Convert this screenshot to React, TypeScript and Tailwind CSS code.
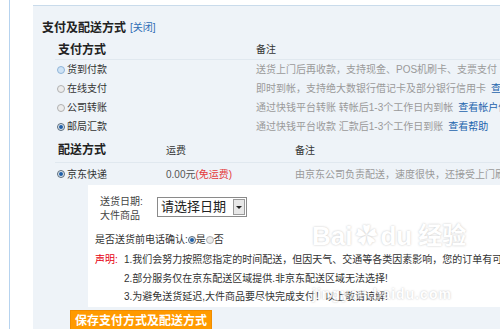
const font = { fontFamily: '"Liberation Sans", "Noto Sans CJK SC", sans-serif' };

type PayRow = { label: string; note: string; link: string; state: 'hover' | 'off' | 'on' };

const payRows: PayRow[] = [
  { label: '货到付款', note: '送货上门后再收款，支持现金、POS机刷卡、支票支付', link: '查看帮助', state: 'hover' },
  { label: '在线支付', note: '即时到帐，支持绝大数银行借记卡及部分银行信用卡', link: '查看银行及限额', state: 'off' },
  { label: '公司转账', note: '通过快钱平台转账 转帐后1-3个工作日内到帐', link: '查看帐户信息', state: 'off' },
  { label: '邮局汇款', note: '通过快钱平台收款 汇款后1-3个工作日到账', link: '查看帮助', state: 'on' },
];

function Radio({ state }: { state: 'hover' | 'off' | 'on' }) {
  if (state === 'on') {
    return (
      <span className="inline-flex items-center justify-center w-[8px] h-[8px] rounded-full border border-[#5b6b7a] bg-[#dfe8f0] shrink-0">
        <span className="w-[4px] h-[4px] rounded-full bg-[#1f5fa8]" />
      </span>
    );
  }
  if (state === 'hover') {
    return <span className="inline-block w-[8px] h-[8px] rounded-full border border-[#8fb4d8] bg-[#cfe3f5] shrink-0" />;
  }
  return <span className="inline-block w-[8px] h-[8px] rounded-full border border-[#b0b0b0] bg-[#ececec] shrink-0" />;
}

export default function App() {
  return (
    <div className="relative w-[500px] h-[329px] overflow-hidden bg-white flex pt-[5px]" style={font}>
      {/* left frame */}
      <div className="w-[9px] shrink-0 -mt-[5px]" />
      <div className="w-px shrink-0 bg-[#b6d3ef] -mt-[5px]" />
      <div className="w-[23px] shrink-0" />

      {/* panel */}
      <div className="flex-1 min-w-0 border-t border-[#c9dbeb] bg-[#eef3f8] whitespace-nowrap text-[10px] text-[#333]">
        <div className="pl-[9px] pt-[14px] flex items-center h-[30px] leading-[16px]">
          <span className="text-[12px] font-bold text-[#222]">支付及配送方式</span>
          <span className="ml-[4px] text-[10px] text-[#2f6db5]">[关闭]</span>
        </div>

        {/* 支付方式 */}
        <div className="ml-[22px] mt-[4px] w-[600px]">
          <div className="flex items-center h-[20px] border-b border-[#e0e8ef]">
            <span className="w-[201px] pl-[3px] text-[12px] font-bold text-[#222]">支付方式</span>
            <span className="text-[10px] text-[#333]">备注</span>
          </div>
          {payRows.map((r) => (
            <div key={r.label} className="flex items-center h-[19px]">
              <div className="w-[201px] flex items-center pl-[2px]">
                <Radio state={r.state} />
                <span className="ml-[2px] text-[#333]">{r.label}</span>
              </div>
              <span className="text-[#9a9a9a]">{r.note}</span>
              <span className="ml-[5px] text-[#1d64ad]">{r.link}</span>
            </div>
          ))}
        </div>

        {/* 配送方式 */}
        <div className="ml-[22px] w-[600px]">
          <div className="flex items-center h-[27px] pt-[2px] border-b border-[#e0e8ef]">
            <span className="w-[111px] pl-[3px] text-[12px] font-bold text-[#222]">配送方式</span>
            <span className="w-[129px] text-[#333]">运费</span>
            <span className="text-[#333]">备注</span>
          </div>
          <div className="flex items-center h-[22px]">
            <div className="w-[111px] flex items-center pl-[2px]">
              <Radio state="on" />
              <span className="ml-[2px] text-[#333]">京东快递</span>
            </div>
            <span className="w-[129px] text-[#555]">
              0.00元<span className="text-[#e4393c]">(免运费)</span>
            </span>
            <span className="text-[#9a9a9a]">由京东公司负责配送，速度很快，还接受上门刷卡付款服务</span>
          </div>
        </div>

        {/* delivery options */}
        <div className="ml-[55px] w-[600px] bg-white pl-[7px] pt-[10px]">
          <div className="flex items-start">
            <div className="w-[62px] pl-[5px] leading-[14px] text-[#444]">
              <div>送货日期:</div>
              <div>大件商品</div>
            </div>
            <div className="mt-[2px] w-[90px] h-[20px] flex items-center border border-[#8a8a8a] bg-white">
              <span className="flex-1 pl-[3px] text-[13px] leading-[18px] text-[#222]">请选择日期</span>
              <span className="w-[12px] h-[16px] mr-[1px] flex items-center justify-center border border-[#9a9a9a] bg-[#e8e8e8]">
                <span className="w-0 h-0 border-l-[3px] border-r-[3px] border-t-[3px] border-l-transparent border-r-transparent border-t-[#222]" />
              </span>
            </div>
          </div>

          <div className="mt-[10px] flex items-center leading-[14px] text-[#333]">
            <span>是否送货前电话确认:</span>
            <Radio state="on" />
            <span>是</span>
            <Radio state="off" />
            <span>否</span>
          </div>

          <div className="mt-[4px] flex leading-[18.5px] text-[#333]">
            <span className="w-[29px] text-[#e60012]">声明:</span>
            <div>
              <div>1.我们会努力按照您指定的时间配送，但因天气、交通等各类因素影响，您的订单有可能会有延误现象！</div>
              <div>2.部分服务仅在京东配送区域提供.非京东配送区域无法选择!</div>
              <div>3.为避免送货延迟,大件商品要尽快完成支付！以上敬请谅解!</div>
            </div>
          </div>
        </div>

        <div className="ml-[37px] mt-[3px]">
          <button
            type="button"
            className="h-[22px] px-[4px] bg-[#ff9a00] border border-[#f08c00] text-white text-[12px] font-bold leading-[20px]"
          >
            保存支付方式及配送方式
          </button>
        </div>
      </div>

      {/* watermark */}
      <div className="absolute left-[312px] top-[222px] text-white opacity-60 [text-shadow:0_0_2px_#9a9a9a] pointer-events-none">
        <div className="flex items-end text-[26px] font-bold leading-[28px]">
          <span>Bai</span>
          <span className="mx-[3px] text-[22px]">✿</span>
          <span>du</span>
          <span className="ml-[6px] text-[24px]">经验</span>
        </div>
        <div className="mt-[34px] text-[14px] font-bold tracking-[1px]">jingyan.baidu.com</div>
      </div>
    </div>
  );
}
